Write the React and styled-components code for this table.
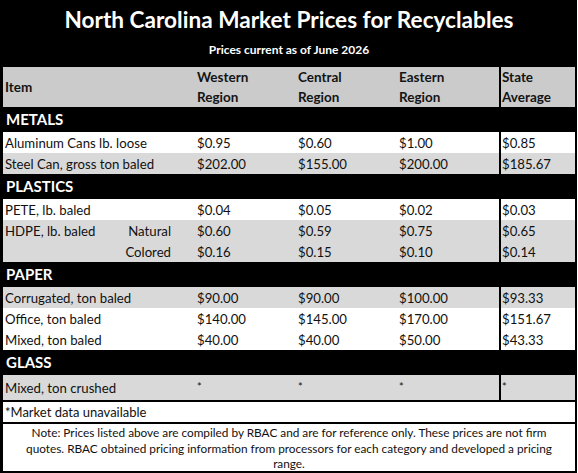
import React from "react";
import styled, { createGlobalStyle } from "styled-components";

const GlobalStyle = createGlobalStyle`
  body {
    margin: 0;
    background: #ffffff;
    font-family: Lato, "Open Sans", sans-serif;
    color: #111;
  }
`;

const sections = [
  {
    name: "METALS",
    rows: [
      { item: "Aluminum Cans lb. loose", values: ["$0.95", "$0.60", "$1.00", "$0.85"], shade: "white" },
      { item: "Steel Can, gross ton baled", values: ["$202.00", "$155.00", "$200.00", "$185.67"], shade: "gray" },
    ],
  },
  {
    name: "PLASTICS",
    rows: [
      { item: "PETE, lb. baled", values: ["$0.04", "$0.05", "$0.02", "$0.03"], shade: "white" },
      { item: "HDPE, lb. baled", sub: "Natural", values: ["$0.60", "$0.59", "$0.75", "$0.65"], shade: "gray" },
      { item: "", sub: "Colored", values: ["$0.16", "$0.15", "$0.10", "$0.14"], shade: "gray" },
    ],
  },
  {
    name: "PAPER",
    rows: [
      { item: "Corrugated, ton baled", values: ["$90.00", "$90.00", "$100.00", "$93.33"], shade: "gray" },
      { item: "Office, ton baled", values: ["$140.00", "$145.00", "$170.00", "$151.67"], shade: "white" },
      { item: "Mixed, ton baled", values: ["$40.00", "$40.00", "$50.00", "$43.33"], shade: "white" },
    ],
  },
  {
    name: "GLASS",
    rows: [
      { item: "Mixed, ton crushed", values: ["*", "*", "*", "*"], shade: "gray", tall: true, star: true },
    ],
  },
];

const App = () => {
  return (
    <>
      <GlobalStyle />
      <Sheet>
        <Title>North Carolina Market Prices for Recyclables</Title>
        <Subtitle>Prices current as of June 2026</Subtitle>
        <HeaderRow>
          <HeadCell>Item</HeadCell>
          <HeadCell>Western<br />Region</HeadCell>
          <HeadCell>Central<br />Region</HeadCell>
          <HeadCell>Eastern<br />Region</HeadCell>
          <HeadCell $avg>State<br />Average</HeadCell>
        </HeaderRow>
        {sections.map((section) => (
          <React.Fragment key={section.name}>
            <SectionRow>{section.name}</SectionRow>
            {section.rows.map((row, i) => (
              <DataRow key={i} $shade={row.shade} $tall={row.tall}>
                <ItemCell>
                  <span>{row.item}</span>
                  {row.sub && <span>{row.sub}</span>}
                </ItemCell>
                {row.values.map((v, j) => (
                  <ValueCell key={j} $avg={j === 3} $star={row.star}>
                    {v}
                  </ValueCell>
                ))}
              </DataRow>
            ))}
          </React.Fragment>
        ))}
        <Footnote>*Market data unavailable</Footnote>
        <Note>
          Note: Prices listed above are compiled by RBAC and are for reference only. These prices are not firm
          <br />
          quotes. RBAC obtained pricing information from processors for each category and developed a pricing
          <br />
          range.
        </Note>
      </Sheet>
    </>
  );
};

const Sheet = styled.div`
  width: 577px;
  box-sizing: border-box;
  background: #000;
  padding: 0 2px 3px 3px;
  display: flex;
  flex-direction: column;
`;

const Title = styled.div`
  color: #fff;
  font-weight: 700;
  font-size: 22.6px;
  text-align: center;
  height: 40px;
  line-height: 40px;
`;

const Subtitle = styled.div`
  color: #fff;
  font-weight: 700;
  font-size: 12px;
  text-align: center;
  height: 27px;
  line-height: 20px;
`;

const columns = `192px 101px 101px 102px 1fr`;

const HeaderRow = styled.div`
  display: grid;
  grid-template-columns: ${columns};
  background: #cbcbcb;
  height: 40px;
`;

const HeadCell = styled.div`
  font-weight: 700;
  font-size: 13.5px;
  line-height: 20px;
  padding-left: ${(p) => (p.$avg ? "1px" : "2px")};
  color: #141414;
  display: flex;
  flex-direction: column;
  justify-content: center;
  align-items: flex-start;
  border-left: ${(p) => (p.$avg ? "2px solid #000" : "none")};
`;

const SectionRow = styled.div`
  color: #fff;
  font-weight: 700;
  font-size: 15px;
  height: 25px;
  line-height: 25px;
  padding-left: 3px;
`;

const DataRow = styled.div`
  display: grid;
  grid-template-columns: ${columns};
  background: ${(p) => (p.$shade === "gray" ? "#d9d9d9" : "#ffffff")};
  height: ${(p) => (p.$tall ? "25px" : "21px")};
  font-size: 13.2px;
  align-items: center;
`;

const ItemCell = styled.div`
  display: flex;
  justify-content: space-between;
  padding-left: 2px;
  padding-right: 24px;
  height: 100%;
  align-items: center;
`;

const ValueCell = styled.div`
  padding-left: ${(p) => (p.$avg ? "1px" : "2px")};
  height: 100%;
  display: flex;
  align-items: ${(p) => (p.$star ? "flex-start" : "center")};
  padding-top: ${(p) => (p.$star ? "5px" : "0")};
  box-sizing: border-box;
  font-size: ${(p) => (p.$star ? "11px" : "inherit")};
  border-left: ${(p) => (p.$avg ? "2px solid #000" : "none")};
`;

const Footnote = styled.div`
  background: #fff;
  margin-top: 2px;
  height: 20px;
  line-height: 20px;
  font-size: 13px;
  padding-left: 2px;
`;

const Note = styled.div`
  background: #fff;
  margin-top: 2px;
  height: 47px;
  font-size: 11.8px;
  line-height: 15.5px;
  text-align: center;
  white-space: nowrap;
  padding: 1px 0 0;
  box-sizing: border-box;
`;

export default App;
